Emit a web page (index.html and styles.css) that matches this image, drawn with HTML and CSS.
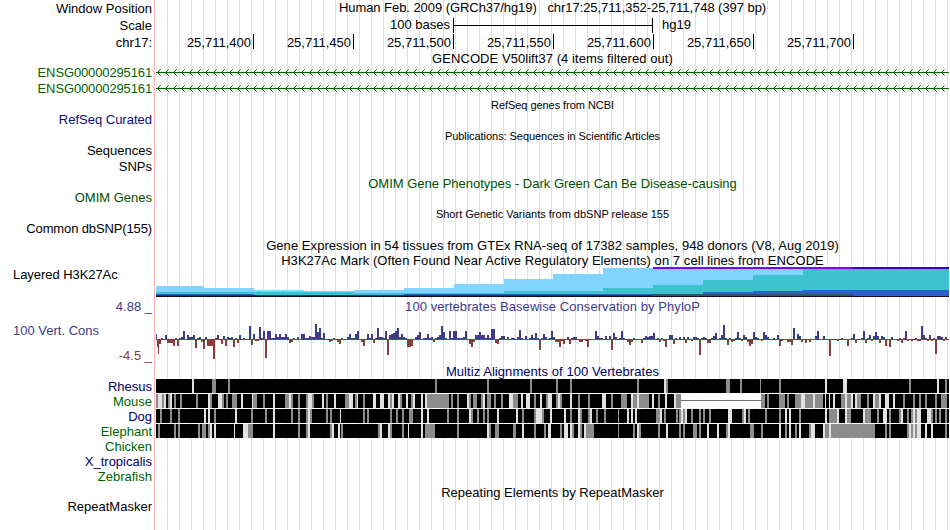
FILE: index.html
```
<!DOCTYPE html>
<html lang="en">
<head>
    <meta charset="UTF-8">
    <title>Genome Browser - chr17:25,711,352-25,711,748</title>
    <link rel="stylesheet" href="styles.css">
</head>
<body>
    <div class="browser">
        <div class="row h16"><div class="label lower">Window Position</div><div class="track title tight">Human Feb. 2009 (GRCh37/hg19) &nbsp; chr17:25,711,352-25,711,748 (397 bp)</div></div>
        <div class="row h18">
            <div class="label lower">Scale</div>
            <div class="track scale"><span class="scale-text">100 bases</span><span class="scale-bar"></span><span>hg19</span></div>
        </div>
        <div class="row h17">
            <div class="label">chr17:</div>
            <div class="track ruler">
                <span>25,711,400</span><span>25,711,450</span><span>25,711,500</span><span>25,711,550</span><span>25,711,600</span><span>25,711,650</span><span>25,711,700</span>
            </div>
        </div>
        <div class="row h15"><div class="label"></div><div class="track title wide">GENCODE V50lift37 (4 items filtered out)</div></div>
        <div class="row h14 green"><div class="label tighter">ENSG00000295161</div><div class="track"><svg class="gene" width="794" height="14"></svg></div></div>
        <div class="row h16 green"><div class="label tighter lower">ENSG00000295161</div><div class="track"><svg class="gene" width="794" height="16"></svg></div></div>
        <div class="row h18"><div class="label"></div><div class="track title small tight">RefSeq genes from NCBI</div></div>
        <div class="row h13 navy"><div class="label raise">RefSeq Curated</div></div>
        <div class="row h18"><div class="label"></div><div class="track title small tight">Publications: Sequences in Scientific Articles</div></div>
        <div class="row h13"><div class="label raise">Sequences</div></div>
        <div class="row h17"><div class="label">SNPs</div></div>
        <div class="row h17 omim"><div class="label"></div><div class="track title">OMIM Gene Phenotypes - Dark Green Can Be Disease-causing</div></div>
        <div class="row h12 omim"><div class="label">OMIM Genes</div></div>
        <div class="row h20"><div class="label"></div><div class="track title small">Short Genetic Variants from dbSNP release 155</div></div>
        <div class="row h11"><div class="label tighter raise">Common dbSNP(155)</div></div>
        <div class="row h19"><div class="label"></div><div class="track title wide lower">Gene Expression in 54 tissues from GTEx RNA-seq of 17382 samples, 948 donors (V8, Aug 2019)</div></div>
        <div class="row h13"><div class="label"></div><div class="track title wide">H3K27Ac Mark (Often Found Near Active Regulatory Elements) on 7 cell lines from ENCODE</div></div>
        <div class="row h30">
            <div class="label left tight">Layered H3K27Ac</div>
            <div class="track"><svg id="h3k27ac" width="794" height="30"></svg></div>
        </div>
        <div class="row h19 cons"><div class="label">4.88 _</div><div class="track title wide">100 vertebrates Basewise Conservation by PhyloP</div></div>
        <div class="row h47 cons">
            <div class="label limits"><span class="left">100 Vert. Cons</span><span class="low">-4.5 _</span></div>
            <div class="track"><svg id="phylop" width="794" height="47"></svg></div>
        </div>
        <div class="row h16 align"><div class="label"></div><div class="track title wide lower">Multiz Alignments of 100 Vertebrates</div></div>
        <div class="row h15 align"><div class="label">Rhesus</div><div class="track"><svg id="rhesus" width="794" height="15"></svg></div></div>
        <div class="row h15 green"><div class="label">Mouse</div><div class="track"><svg id="mouse" width="794" height="15"></svg></div></div>
        <div class="row h15 align"><div class="label">Dog</div><div class="track"><svg id="dog" width="794" height="15"></svg></div></div>
        <div class="row h15 green"><div class="label">Elephant</div><div class="track"><svg id="elephant" width="794" height="15"></svg></div></div>
        <div class="row h15 green"><div class="label">Chicken</div></div>
        <div class="row h15 align"><div class="label">X_tropicalis</div></div>
        <div class="row h15 green"><div class="label">Zebrafish</div></div>
        <div class="row h17"><div class="label"></div><div class="track title">Repeating Elements by RepeatMasker</div></div>
        <div class="row h11"><div class="label">RepeatMasker</div></div>
    </div>
    <script src="tracks.js"></script>
</body>
</html>
```
FILE: styles.css
```
body {
    margin: 0;
    background: #fff;
    color: #000;
    font-family: "Liberation Sans", Arial, sans-serif;
    font-size: 13px;
}
.browser {
    width: 949px;
    height: 530px;
    overflow: hidden;
    background:
        linear-gradient(#ffb4b4, #ffb4b4) 154px 0 / 1px 100% no-repeat,
        repeating-linear-gradient(to right, #dcdcf5 0, #dcdcf5 1px, transparent 1px, transparent 12px) 167px 0 / 782px 100% no-repeat;
}
.row {
    display: flex;
    white-space: nowrap;
}
.label {
    width: 152px;
    margin-right: 4px;
    flex: none;
    text-align: right;
}
.left {
    box-sizing: border-box;
    padding-left: 13px;
    text-align: left;
}
.track {
    width: 793px;
    flex: none;
}
.title {
    text-align: center;
}
.small {
    font-size: 11px;
}
svg {
    display: block;
}

/* text fitting */
.tight { letter-spacing: -0.055px; }
.tighter { letter-spacing: -0.13px; }
.wide { letter-spacing: 0.06px; }
.lower { padding-top: 1px; }
.raise { margin-top: -1px; }

/* row heights */
.h11 { height: 11px; line-height: 11px; }
.h12 { height: 12px; line-height: 12px; }
.h13 { height: 13px; line-height: 13px; }
.h14 { height: 14px; line-height: 14px; }
.h15 { height: 15px; line-height: 15px; }
.h16 { height: 16px; line-height: 16px; }
.h17 { height: 17px; line-height: 17px; }
.h18 { height: 18px; line-height: 18px; }
.h19 { height: 19px; line-height: 19px; }
.h20 { height: 20px; line-height: 20px; }
.h30 { height: 30px; line-height: 15px; }
.h47 { height: 47px; }

/* track colours */
.green { color: #006400; }
.omim { color: #005000; }
.navy { color: #0c0c78; }
.align { color: #000064; }
.cons { color: #3c3c8c; }

.scale {
    display: flex;
    align-items: center;
}
.scale-text {
    width: 294px;
    text-align: right;
}
.scale-bar {
    width: 198px;
    height: 15px;
    margin: 0 9px 0 3px;
    border: solid #000;
    border-width: 0 1px;
    background: linear-gradient(#000, #000) 0 7px / 100% 1px no-repeat;
}
.ruler {
    display: flex;
}
.ruler span {
    box-sizing: border-box;
    width: 100px;
    height: 15px;
    padding-right: 2px;
    border-right: 1px solid #000;
    text-align: right;
}
.ruler span:first-child {
    width: 98px;
}
.limits {
    display: flex;
    justify-content: space-between;
}
.limits .left {
    margin-top: 7px;
}
.low {
    margin-top: 32px;
    color: #8c3c3c;
}
```
FILE: tracks.js
```
var NS = 'http://www.w3.org/2000/svg';
var LEFT = 156;
var RIGHT = 949;

function path(svg, d, fill) {
    var p = document.createElementNS(NS, 'path');
    p.setAttribute('d', d);
    p.setAttribute('fill', fill);
    svg.appendChild(p);
}

function box(x, y, w, h) {
    return 'M' + (x - LEFT) + ' ' + y + 'h' + w + 'v' + h + 'h' + (-w) + 'z';
}

// introns with strand arrows every 8px, the arrow tails are softer
document.querySelectorAll('.gene').forEach(function (svg) {
    var y = svg.getAttribute('height') == '14' ? 6 : 8;
    var arms = '';
    var tails = '';
    for (var x = 157; x < RIGHT; x += 8) {
        arms += box(x + 1, y - 1, 1, 3) + box(x + 2, y - 2, 1, 1) + box(x + 2, y + 2, 1, 1);
        tails += box(x + 3, y - 3, 1, 1) + box(x + 3, y + 3, 1, 1);
    }
    path(svg, box(LEFT, y, RIGHT - LEFT, 1), '#006400');
    path(svg, arms, '#006400');
    path(svg, tails, '#7fb17f');
});

// layered histogram, [x, top] steps down to the baseline
function steps(svg, list, end, bottom, color) {
    var d = '';
    list.forEach(function (s, i) {
        var next = i + 1 < list.length ? list[i + 1][0] : end;
        d += box(s[0], s[1] - 267, next - s[0], bottom - s[1]);
    });
    path(svg, d, color);
}
var mark = document.getElementById('h3k27ac');
steps(mark, [[156, 286], [204, 288], [254, 290], [304, 291], [354, 290], [404, 288], [454, 284], [504, 279], [553, 274], [603, 268]], 803, 297, '#80d4ff');
steps(mark, [[156, 292], [304, 292], [354, 293], [504, 291], [603, 288], [653, 285], [703, 280], [753, 275], [803, 269]], RIGHT, 297, '#3cc3cd');
steps(mark, [[156, 294], [254, 295], [404, 294], [703, 292], [753, 291], [803, 290]], RIGHT, 297, '#2d5fcd');
steps(mark, [[653, 294]], 853, 296, '#38506e');
steps(mark, [[156, 295]], 653, 296, '#1e2896');
steps(mark, [[156, 296]], RIGHT, 297, '#140a28');
steps(mark, [[653, 267]], 853, 269, '#8000ff');
steps(mark, [[853, 267]], RIGHT, 269, '#3200c8');

// phyloP score of every base, in pixels from the zero line
var scores = [
    -5,1,-1,4,-4,-4,-4,-7,1,-7,1,2,8,-1,4,2,2,4,-9,1,2,-3,-10,2,-7,-7,-7,-20,1,4,
    -1,-5,3,-7,2,1,2,-8,1,-4,4,-1,1,-1,-1,13,-6,5,-2,-2,12,1,8,-19,8,8,1,1,5,2,
    5,2,2,5,2,-4,-3,1,-1,2,-1,5,5,1,1,3,2,2,15,7,11,1,6,-1,-1,-3,-2,1,-1,-3,
    -5,1,-1,-1,2,5,1,1,5,8,-1,-3,-7,-1,5,1,5,-4,1,11,2,2,1,8,-16,4,5,6,8,11,
    2,5,2,1,-8,-8,-7,-1,2,4,7,-1,1,1,5,1,2,-3,1,2,4,13,7,1,-1,8,1,8,8,1,
    1,1,2,8,-1,-5,-8,-3,4,4,7,4,4,1,4,1,10,10,-4,-5,1,3,3,-1,2,-1,1,1,-1,2,
    9,1,-1,3,-1,1,4,1,6,1,-11,1,5,2,-1,1,8,2,-3,-3,-8,-2,-5,-1,2,-5,1,2,2,-1,
    -3,-3,-1,-2,-8,-1,-1,-1,8,3,1,1,-1,3,-1,3,-11,6,2,-1,1,8,1,-1,-3,-6,-3,1,-1,-1,
    -1,-4,1,3,2,3,3,6,-1,1,-3,1,-2,-8,-1,4,4,-5,1,-1,2,-1,2,-4,2,-1,-2,2,2,1,
    -16,1,2,1,-4,-4,1,3,6,-1,1,4,14,1,-6,1,-3,-2,1,7,1,-2,4,2,-3,-7,-5,7,2,1,
    -1,-2,7,4,2,-1,-1,1,-1,4,-7,-2,-1,-1,-3,-3,-6,11,-1,5,3,-3,-1,-4,-1,-3,-1,-1,3,8,
    -1,-1,3,-1,-1,-17,-1,-1,-1,-2,-1,1,-1,-1,-7,-1,1,5,-4,-1,-1,1,8,-4,1,4,-2,3,7,3,
    -4,3,2,-7,-1,-8,2,-1,-1,-2,1,-4,1,8,-2,-1,-2,-1,1,-2,-2,13,4,1,-2,4,-2,1,-15,3,
    3,2,-2,2,-1
];
var zero = 23;
var up = box(156, zero - 5, 1, 5);
var down = box(157, zero, 1, 8) + box(158, zero, 1, 15);
scores.forEach(function (s, i) {
    if (s > 0) up += box(159 + i * 2, zero - s, 2, s);
    else down += box(159 + i * 2, zero, 2, -s);
});
path(document.getElementById('phylop'), box(LEFT, zero, RIGHT - LEFT, 1) + down, '#8c3c3c');
path(document.getElementById('phylop'), up, '#3c3c8c');

// alignment shading, "x" or "x:width" (2px when left out)
function shade(svg, list, color) {
    var d = '';
    list.split(' ').forEach(function (item) {
        var p = item.split(':');
        d += box(+p[0], 0, +(p[1] || 2), 14);
    });
    path(svg, d, color);
}
var species = {
    rhesus: {
        grey: '212:4 228 435 487 530 556 570 637 666 726:4 740 760:1 779 909 945',
        light: '192 664 825 843:4 937'
    },
    mouse: {
        grey: '156 162 168 174 180 196 210 222 226 232:5 253:4 263 285:4 291 298 306 312 326 345:4 355 363 390 400 411 427:22 451 457 469 473:4 481 487:4 494 501 513:5 534 546 556 560 578 588 611 621:6 633:4 639:10 658 676:5 761:4 767 779:6 787 795:6 805:8 815:8 841:4 847:4 857:4 867 875:4 903 913 919 925 935 941:6',
        light: '158:4 164 170 208 218:4 241 252:1 273 289 308:4 322 334 349:4 357:1 373:3 380:4 388 392 398 406 413 421 425 467 483 509:4 521 526:4 540 548:4 558 570 602:4 631 637 652 665 674 801:4 813 825:1 829:1 833 845 851 855 873 879 885:4 893'
    },
    dog: {
        grey: '160 170 178 214 251 265 291 298 306 310 326 330 363 367 390 396 402 409:4 447 457 471 477 483 487 522 534 542 570 580 588 596 604 618:1 656:4 664 676 679 683 691 699 703 709 742 748 765 779 799 829 831:6 847:4 865:6 877 889 899 907 911 915 931 935 939 945',
        light: '204 208 235 273 308 340:1 421 427 469 497 516 536:6 550 564 578 590 627 631 635 660 681 685 728:4 744 785 789 825 837 845 863 883:4 901 913 917:4 927 929'
    },
    elephant: {
        grey: '158 174 178 198 202:4 208 248:5 298 306 330 341 378 390 402 425 427:8 457 489 495:4 513:3 534 544 560 572 580 586:8 618:1 633 639 658 679 683 693:4 699 726 750:4 761 785 795 809 825:4 831:44 885 889 907 911 915 945',
        light: '210 214 234:1 243:5 273 308 332 338 380 388 408:1 421 487 522 548 550:1 564:4 570 578 584 637 666 707 717 728 779 789 799 811:4 823 829 909 913 917:4 925 931'
    }
};
Object.keys(species).forEach(function (name) {
    var svg = document.getElementById(name);
    path(svg, box(LEFT, 0, RIGHT - LEFT, 14), '#000');
    shade(svg, species[name].grey, '#8c8c8c');
    shade(svg, species[name].light, '#e1e1e1');
    if (name == 'mouse') {
        // unaligned gap
        path(svg, box(681, 0, 80, 14), '#fff');
        path(svg, box(681, 6, 80, 1), '#6e6e6e');
    }
});
```
